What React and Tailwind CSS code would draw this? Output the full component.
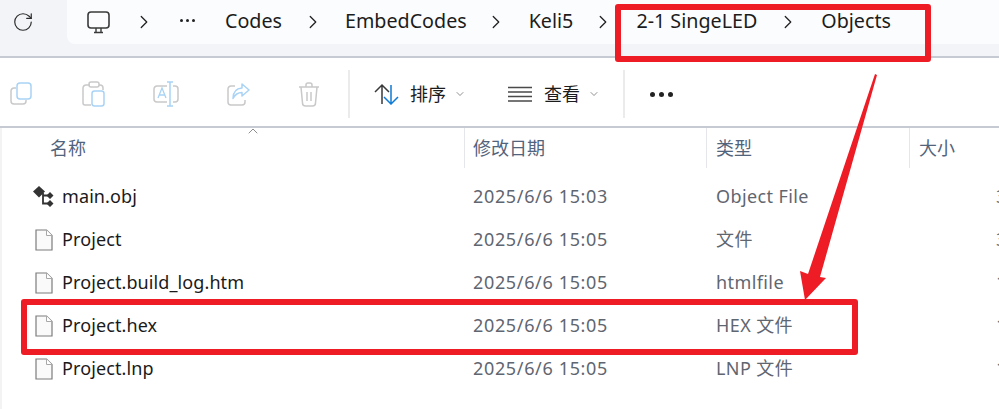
import React from "react";
import { RotateCw, ChevronRight, ChevronDown, ChevronUp } from "lucide-react";

const font = "font-['Noto_Sans','Noto_Sans_CJK_SC',sans-serif]";

const files = [
  { name: "main.obj", date: "2025/6/6 15:03", type: "Object File", size: "3 KB", icon: "obj" },
  { name: "Project", date: "2025/6/6 15:05", type: "文件", size: "3 KB" },
  { name: "Project.build_log.htm", date: "2025/6/6 15:05", type: "htmlfile", size: "1 KB" },
  { name: "Project.hex", date: "2025/6/6 15:05", type: "HEX 文件", size: "1 KB" },
  { name: "Project.lnp", date: "2025/6/6 15:05", type: "LNP 文件", size: "1 KB" },
];

function FileIcon() {
  return (
    <svg width="18" height="22" viewBox="0 0 18 22" className="shrink-0">
      <path d="M1 1h10.500l5.500 5.500V21H1z" fill="#fafafa" stroke="#7c7c7c" strokeWidth="1.200" />
      <path d="M11.500 1v5.500H17" fill="#fff" stroke="#a8a8a8" />
    </svg>
  );
}

function ObjIcon() {
  return (
    <svg width="22" height="22" viewBox="0 0 22 22" className="shrink-0 -ml-[2px]">
      <path d="M6 0l6 5.500-6 6-6-6z" fill="#333" />
      <path d="M10 7v10.500h7M10 9.500h7" fill="none" stroke="#333" strokeWidth="1.800" />
      <path d="M17 6l3.500 3.500-3.500 3.500-3.500-3.500zM17 14l3.500 3.500-3.500 3.500-3.500-3.500z" fill="#333" />
    </svg>
  );
}

function Sep() {
  return <ChevronRight size={22} strokeWidth={1.4} className="text-[#222] shrink-0" />;
}

function GrayIcons() {
  return (
    <div className="flex items-center w-[350px] h-[48px] border-r-2 border-[#ebebeb] pl-[10px] gap-[48px]">
      {/* copy */}
      <svg width="23" height="24" viewBox="0 0 23 24" fill="none" className="shrink-0">
        <path d="M6 6H4a3 3 0 0 0-3 3v10a3 3 0 0 0 3 3h9a3 3 0 0 0 3-3v-1" stroke="#c9c9c9" strokeWidth="1.500" />
        <rect x="7" y="1" width="14" height="16" rx="3" stroke="#a9d3f5" strokeWidth="1.500" />
      </svg>
      {/* paste */}
      <svg width="23" height="26" viewBox="0 0 23 26" fill="none" className="shrink-0 ml-[1px]">
        <path d="M8 4H4a3 3 0 0 0-3 3v15a2 2 0 0 0 2 2h6M17 4h1a3 3 0 0 1 3 3v2" stroke="#c9c9c9" strokeWidth="1.500" />
        <rect x="7" y="1" width="10" height="5" rx="2" stroke="#c9c9c9" strokeWidth="1.500" />
        <rect x="10" y="10" width="12" height="15" rx="2.500" stroke="#a9d3f5" strokeWidth="1.500" />
      </svg>
      {/* rename */}
      <svg width="26" height="26" viewBox="0 0 26 26" fill="none" className="shrink-0">
        <path d="M14 5H4a3 3 0 0 0-3 3v10a3 3 0 0 0 3 3h10M20 5h2a3 3 0 0 1 3 3v10a3 3 0 0 1-3 3h-2" stroke="#c9c9c9" strokeWidth="1.500" />
        <path d="M14 1h6M17 1v24M14 25h6" stroke="#a9d3f5" strokeWidth="1.500" />
        <path d="M5 17l4-10 4 10M6.500 14h5" stroke="#a9d3f5" strokeWidth="1.300" />
      </svg>
      {/* share */}
      <svg width="23" height="24" viewBox="0 0 23 24" fill="none" className="shrink-0">
        <path d="M8 4H4a3 3 0 0 0-3 3v13a3 3 0 0 0 3 3h11a3 3 0 0 0 3-3v-2" stroke="#c9c9c9" strokeWidth="1.500" />
        <path d="M15 2l7 6-7 6v-3.500c-5 0-7 2-9 6 0-6 3-10 9-10.500z" stroke="#a9d3f5" strokeWidth="1.500" strokeLinejoin="round" />
      </svg>
      {/* delete */}
      <svg width="22" height="25" viewBox="0 0 22 25" fill="none" className="shrink-0">
        <path d="M1 5h20M8 5V3a2 2 0 0 1 2-2h2a2 2 0 0 1 2 2v2M3 5l1.500 16a3 3 0 0 0 3 3h7a3 3 0 0 0 3-3L19 5M9 10v9M13 10v9" stroke="#c9c9c9" strokeWidth="1.500" />
      </svg>
    </div>
  );
}

export default function App() {
  return (
    <div className={`relative w-[999px] h-[409px] overflow-hidden bg-white ${font}`}>
      {/* address bar */}
      <div className="h-[58px] bg-[#f3f4f8] border-b-2 border-[#c6cbd3] flex">
        <div className="w-[67px] h-[44px] flex items-center pl-[12px] shrink-0">
          <RotateCw size={22} strokeWidth={1.3} className="text-[#2b2b2b]" />
        </div>
        <div className="flex-1 h-[44px] bg-[#fbfcfe] rounded-bl-lg flex items-center text-[19.7px] text-[#1c1c1c] whitespace-nowrap">
          <svg width="24" height="23" viewBox="0 0 24 23" fill="none" className="ml-[20px] shrink-0">
            <rect x="1" y="1" width="21" height="16" rx="3" stroke="#3a3a3a" strokeWidth="1.600" />
            <path d="M7 21.500h9M9 17v4M14 17v4" stroke="#3a3a3a" strokeWidth="1.400" />
          </svg>
          <div className="ml-[22px]"><Sep /></div>
          <div className="ml-[25px] flex gap-[3px] w-[17px] shrink-0 -mt-[4px]">
            <span className="w-[3px] h-[3px] rounded-full bg-[#222]" />
            <span className="w-[3px] h-[3px] rounded-full bg-[#222]" />
            <span className="w-[3px] h-[3px] rounded-full bg-[#222]" />
          </div>
          <span className="ml-[28px] -mt-[2px]">Codes</span>
          <div className="ml-[20px]"><Sep /></div>
          <span className="ml-[21px] -mt-[2px]">EmbedCodes</span>
          <div className="ml-[18px]"><Sep /></div>
          <span className="ml-[22px] -mt-[2px]">Keli5</span>
          <div className="ml-[19px]"><Sep /></div>
          <span className="ml-[22px] -mt-[2px]">2-1 SingeLED</span>
          <div className="ml-[20px]"><Sep /></div>
          <span className="ml-[22px] -mt-[2px]">Objects</span>
        </div>
      </div>

      {/* toolbar */}
      <div className="h-[70px] pt-[4px] border-b-2 border-[#c6cbd3] flex items-center text-[18px] text-[#1c1c1c]">
        <GrayIcons />
        <div className="flex items-center w-[158px] pl-[24px]">
          <svg width="25" height="22" viewBox="0 0 25 22" fill="none" className="shrink-0">
            <path d="M8 21V2M1 9l7-7 7 7" stroke="#3a3a3a" strokeWidth="1.500" />
            <path d="M17 2v19M10 14l7 7 7-7" stroke="#0f7bd4" strokeWidth="1.500" />
          </svg>
          <span className="ml-[11px]">排序</span>
          <ChevronDown size={12} strokeWidth={1.3} className="ml-[8px] text-[#555]" />
        </div>
        <div className="flex items-center w-[117px] h-[48px] border-r-2 border-[#ebebeb]">
          <svg width="24" height="16" viewBox="0 0 24 16" fill="none" className="shrink-0">
            <path d="M0 1.500h24M0 6h24M0 10.500h24M0 15h24" stroke="#4a4a4a" strokeWidth="1.300" />
          </svg>
          <span className="ml-[12px]">查看</span>
          <ChevronDown size={12} strokeWidth={1.3} className="ml-[8px] text-[#555]" />
        </div>
        <div className="flex gap-[4px] ml-[25px]">
          <span className="w-[5px] h-[5px] rounded-full bg-[#222]" />
          <span className="w-[5px] h-[5px] rounded-full bg-[#222]" />
          <span className="w-[5px] h-[5px] rounded-full bg-[#222]" />
        </div>
      </div>

      {/* file list */}
      <div className="border-l-2 border-[#f3f3f3] h-[281px]">
        <div className="relative grid grid-cols-[462px_242px_203px_90px] h-[40px] text-[18px] text-[#52647c]">
          <div className="relative flex items-center pl-[48px] pt-[1px]">
            名称
            <ChevronUp size={16} strokeWidth={1} className="absolute left-[243px] -top-[5px] text-[#555]" />
          </div>
          <div className="flex items-center pl-[8px] pt-[1px] border-l border-[#e4e6ea]">修改日期</div>
          <div className="flex items-center pl-[9px] pt-[1px] border-l border-[#e4e6ea]">类型</div>
          <div className="flex items-center pl-[9px] pt-[1px] border-l border-[#e4e6ea]">大小</div>
        </div>
        <div className="pt-[7px]">
          {files.map((f) => (
            <div key={f.name} className="grid grid-cols-[462px_242px_203px_90px] h-[43px] items-center text-[18px] text-[#5f6670] whitespace-nowrap">
              <div className="flex items-center pl-[33px] text-[#1a1a1a]">
                <div className="w-[27px]">{f.icon === "obj" ? <ObjIcon /> : <FileIcon />}</div>
                <span className="tracking-[0.1px]">{f.name}</span>
              </div>
              <div className="pl-[9px] tracking-[0.65px]">{f.date}</div>
              <div className="pl-[10px] tracking-[0.4px]">{f.type}</div>
              <div className="pl-[87px] overflow-hidden">{f.size}</div>
            </div>
          ))}
        </div>
      </div>

      {/* red annotations */}
      <div className="absolute left-[615px] top-[4px] w-[316px] h-[58px] border-[6px] border-[#ee1c25] rounded-[3px]" />
      <div className="absolute left-[21px] top-[299px] w-[837px] h-[56px] border-[6px] border-[#ee1c25] rounded-[3px]" />
      <svg width="999" height="409" viewBox="0 0 999 409" className="absolute left-0 top-0 pointer-events-none">
        <polygon points="875,74 877,75 820,277 826,278 805,300 800,271 808,274" fill="#ee1c25" />
      </svg>
    </div>
  );
}
